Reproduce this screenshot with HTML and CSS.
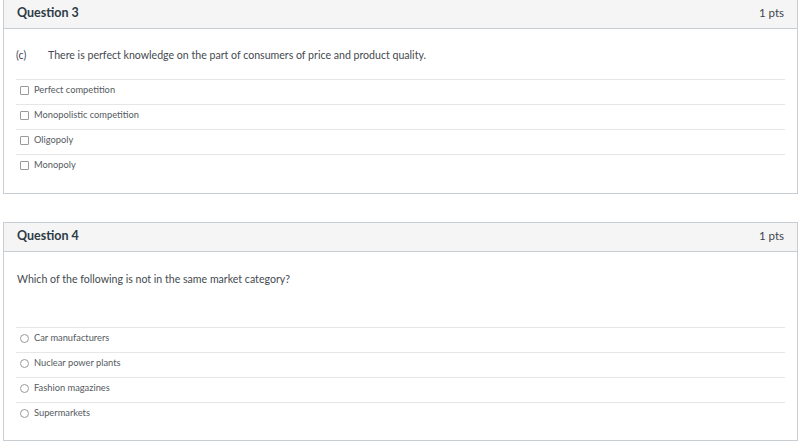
FILE: index.html
```html
<!DOCTYPE html>
<html>
<head>
<meta charset="utf-8">
<link rel="stylesheet" href="styles.css">
</head>
<body>
<div class="page">
  <section class="card card-first">
    <header class="card-head">
      <span class="q-title">Question 3</span>
      <span class="q-pts">1 pts</span>
    </header>
    <div class="card-body">
      <div class="q-text q-text-1"><span class="q-label">(c)</span><span>There is perfect knowledge on the part of consumers of price and product quality.</span></div>
      <ul class="answers answers-1">
        <li class="answer"><span class="box"></span>Perfect competition</li>
        <li class="answer"><span class="box"></span>Monopolistic competition</li>
        <li class="answer"><span class="box"></span>Oligopoly</li>
        <li class="answer"><span class="box"></span>Monopoly</li>
      </ul>
    </div>
  </section>
  <section class="card card-second">
    <header class="card-head">
      <span class="q-title">Question 4</span>
      <span class="q-pts">1 pts</span>
    </header>
    <div class="card-body">
      <div class="q-text q-text-2">Which of the following is not in the same market category?</div>
      <ul class="answers answers-2">
        <li class="answer"><span class="radio"></span>Car manufacturers</li>
        <li class="answer"><span class="radio"></span>Nuclear power plants</li>
        <li class="answer"><span class="radio"></span>Fashion magazines</li>
        <li class="answer"><span class="radio"></span>Supermarkets</li>
      </ul>
    </div>
  </section>
</div>
</body>
</html>
```

FILE: styles.css
```css
html, body {
  margin: 0;
  padding: 0;
  background: #ffffff;
}
body {
  font-family: Lato, "Liberation Sans", sans-serif;
  color: #2d3b45;
  width: 800px;
  height: 441px;
  overflow: hidden;
}
.page {
  display: flex;
  flex-direction: column;
  gap: 28px;
  padding: 0 2px 0 3px;
}
.card {
  border: 1px solid #c7cdd1;
  background: #fff;
}
.card-first {
  margin-top: -1px;
}
.card-head {
  height: 29px;
  box-sizing: border-box;
  background: #f5f5f5;
  border-bottom: 1px solid #c7cdd1;
  display: flex;
  align-items: center;
  justify-content: space-between;
  padding: 0 13px 3px 13px;
}
.q-title {
  font-weight: 700;
  font-size: 12.5px;
  color: #2d3b45;
}
.q-pts {
  font-weight: 400;
  font-size: 11.5px;
  color: #3d464d;
}
.card-body {
  padding: 0 12px 0 12px;
}
.q-text {
  font-size: 10.6px;
  line-height: 12px;
  color: #444a4f;
}
.q-text-1 {
  padding: 20px 0 18px 0;
  display: flex;
}
.q-label {
  width: 32px;
  flex: none;
}
.q-text-2 {
  padding: 21px 1px 42px 1px;
}
.answers {
  list-style: none;
  margin: 0;
  padding: 0;
}
.answers-1 {
  padding-bottom: 14px;
}
.answers-2 {
  padding-bottom: 13px;
}
.answer {
  border-top: 1px solid #e4e6e8;
  height: 24px;
  display: flex;
  align-items: flex-start;
  padding-left: 4px;
  font-size: 9.3px;
  line-height: 20px;
  color: #555a5e;
}
.box,
.radio {
  width: 7px;
  height: 7px;
  border: 1px solid #9a9a9a;
  margin: 6px 5px 0 0;
  flex: none;
}
.box {
  border-radius: 1px;
}
.radio {
  border-radius: 50%;
}
```
